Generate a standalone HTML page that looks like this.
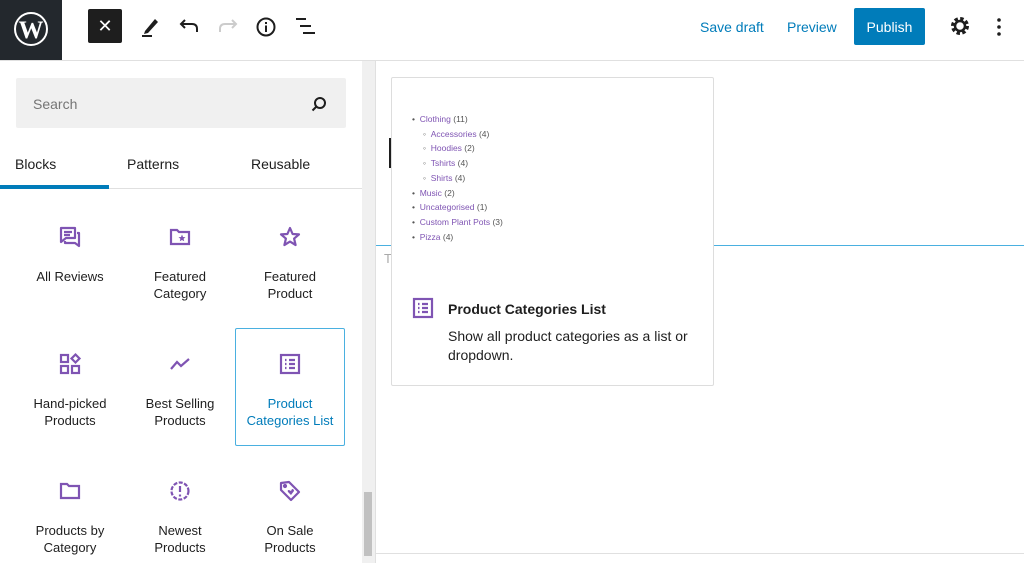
<!DOCTYPE html>
<html><head><meta charset="utf-8"><style>
*{margin:0;padding:0;box-sizing:border-box}
body{width:1024px;height:563px;overflow:hidden;background:#fff;font-family:"Liberation Sans",sans-serif;position:relative;color:#1e1e1e}
.a{position:absolute}
.lbl{position:absolute;width:110px;text-align:center;font-size:13px;line-height:17px;color:#1e1e1e}
.ic{position:absolute;width:24px;height:24px}
.ic svg{width:24px;height:24px;fill:none;stroke:#7f54b3;stroke-width:2.2}
</style></head><body>
<div class="a" style="left:0;top:0;width:62px;height:60px;background:#23282d"></div>
<svg class="a" style="left:13px;top:11px" width="36" height="36" viewBox="0 0 36 36"><circle cx="18" cy="18" r="16" fill="none" stroke="#fff" stroke-width="2"/><text x="18" y="27" font-family="Liberation Serif" font-size="25" font-weight="bold" fill="#fff" text-anchor="middle">W</text></svg>
<div class="a" style="left:0;top:60px;width:1024px;height:1px;background:#e0e0e0"></div>
<div class="a" style="left:88px;top:9px;width:34px;height:34px;background:#1e1e1e;border-radius:2px;color:#fff;font-size:18px;text-align:center;line-height:34px">✕</div>
<svg class="a" style="left:140px;top:14px" width="22" height="24" viewBox="0 0 22 24"><path d="M5 17 L15 5 L18 8 L8 19 L4 20 Z" fill="#1e1e1e"/><rect x="2" y="21" width="10" height="2" fill="#1e1e1e"/></svg>
<svg class="a" style="left:178px;top:16px" width="22" height="20" viewBox="0 0 22 20" fill="none" stroke="#1e1e1e" stroke-width="2"><path d="M7 4 L3 8 L7 12 M3 8 H14 Q19 8 19 13 V16"/></svg>
<svg class="a" style="left:217px;top:16px" width="22" height="20" viewBox="0 0 22 20" fill="none" stroke="#ccc" stroke-width="2"><path d="M15 4 L19 8 L15 12 M19 8 H8 Q3 8 3 13 V16"/></svg>
<svg class="a" style="left:255px;top:16px" width="22" height="22" viewBox="0 0 22 22" fill="none" stroke="#1e1e1e" stroke-width="2"><circle cx="11" cy="11" r="8.5"/><path d="M11 9.5 V16 M11 6 V8"/></svg>
<svg class="a" style="left:294px;top:17px" width="22" height="18" viewBox="0 0 22 18" stroke="#1e1e1e" stroke-width="2"><path d="M2 2 H12 M6 9 H17 M9 16 H21"/></svg>
<div class="a" style="left:700px;top:19px;font-size:14px;color:#007cba">Save draft</div>
<div class="a" style="left:787px;top:19px;font-size:14px;color:#007cba">Preview</div>
<div class="a" style="left:854px;top:8px;width:71px;height:37px;background:#007cba;border-radius:2px;color:#fff;font-size:14px;text-align:center;line-height:39px">Publish</div>
<svg class="a" style="left:950px;top:16px" width="20" height="20" viewBox="0 0 20 20"><circle cx="10" cy="10" r="6.5" fill="none" stroke="#1e1e1e" stroke-width="5" stroke-dasharray="3 2.1"/><circle cx="10" cy="10" r="5" fill="none" stroke="#1e1e1e" stroke-width="2.5"/></svg>
<svg class="a" style="left:996px;top:17px" width="6" height="20"><circle cx="3" cy="3" r="1.8" fill="#1e1e1e"/><circle cx="3" cy="10" r="1.8" fill="#1e1e1e"/><circle cx="3" cy="17" r="1.8" fill="#1e1e1e"/></svg>
<div class="a" style="left:375px;top:61px;width:1px;height:502px;background:#e0e0e0"></div>
<div class="a" style="left:362px;top:61px;width:13px;height:502px;background:#f0f0f0"></div>
<div class="a" style="left:364px;top:492px;width:8px;height:64px;background:#c1c1c1"></div>
<div class="a" style="left:16px;top:78px;width:330px;height:50px;background:#f0f0f0;border-radius:2px"></div>
<div class="a" style="left:33px;top:96px;font-size:14px;color:#757575">Search</div>
<svg class="a" style="left:311px;top:96px" width="16" height="16" viewBox="0 0 16 16" fill="none" stroke="#1e1e1e" stroke-width="2"><circle cx="9" cy="7" r="5"/><path d="M5.5 10.5 L1.5 14.5"/></svg>
<div class="a" style="left:15px;top:156px;font-size:14px">Blocks</div>
<div class="a" style="left:127px;top:156px;font-size:14px">Patterns</div>
<div class="a" style="left:251px;top:156px;font-size:14px">Reusable</div>
<div class="a" style="left:0;top:188px;width:362px;height:1px;background:#e0e0e0"></div>
<div class="a" style="left:0;top:185px;width:109px;height:4px;background:#007cba"></div>
<div class="a" style="left:235px;top:328px;width:110px;height:118px;border:1px solid #4ab0e0;border-radius:2px"></div>
<div class="ic" style="left:58px;top:225px"><svg viewBox="0 0 24 24"><path d="M3 3 H17 V13 H8 L3 17 Z M7 16 V18 H17 L21 21 V8 H19" stroke-linejoin="round"/><path d="M6 7 H14 M6 10 H12"/></svg></div>
<div class="ic" style="left:168px;top:225px"><svg viewBox="0 0 24 24"><path d="M3 5 H9 L11 7 H21 V19 H3 Z"/><path d="M14 9.5 L15 12 L17.5 12.2 L15.6 13.8 L16.2 16.3 L14 15 L11.8 16.3 L12.4 13.8 L10.5 12.2 L13 12 Z" fill="#7f54b3" stroke-width="0"/></svg></div>
<div class="ic" style="left:278px;top:225px"><svg viewBox="0 0 24 24"><path d="M12 3 L14.6 9 L21 9.4 L16.1 13.6 L17.6 20 L12 16.6 L6.4 20 L7.9 13.6 L3 9.4 L9.4 9 Z" stroke-linejoin="round"/></svg></div>
<div class="ic" style="left:58px;top:352px"><svg viewBox="0 0 24 24"><rect x="3" y="3" width="7" height="7"/><rect x="3" y="14" width="7" height="7"/><rect x="14" y="14" width="7" height="7"/><path d="M17.5 2.5 L21.5 6.5 L17.5 10.5 L13.5 6.5 Z"/></svg></div>
<div class="ic" style="left:168px;top:352px"><svg viewBox="0 0 24 24"><path d="M3 17 L9 10 L13 14 L21 7"/></svg></div>
<div class="ic" style="left:278px;top:352px"><svg viewBox="0 0 24 24"><rect x="3" y="3" width="18" height="18"/><path d="M7 8 H8.5 M11 8 H17 M7 12 H8.5 M11 12 H17 M7 16 H8.5 M11 16 H17"/></svg></div>
<div class="ic" style="left:58px;top:479px"><svg viewBox="0 0 24 24"><path d="M3 5 H9 L11 7 H21 V19 H3 Z"/></svg></div>
<div class="ic" style="left:168px;top:479px"><svg viewBox="0 0 24 24"><circle cx="12" cy="12" r="8.5" stroke-dasharray="4 1.5"/><path d="M12 7 V13 M12 15.5 V17.5"/></svg></div>
<div class="ic" style="left:278px;top:479px"><svg viewBox="0 0 24 24"><path d="M3 4 L11 3 L21 13 L13 21 L3 11 Z" stroke-linejoin="round"/><circle cx="7" cy="7" r="1" fill="#7f54b3"/><path d="M13 16 L10 13 Q9 11 11 11 L13 12 L14 10 Q16 10 16 12 Z" fill="#7f54b3" stroke-width="0"/></svg></div>
<div class="lbl" style="left:15px;top:268px">All Reviews</div>
<div class="lbl" style="left:125px;top:268px">Featured<br>Category</div>
<div class="lbl" style="left:235px;top:268px">Featured<br>Product</div>
<div class="lbl" style="left:15px;top:395px">Hand-picked<br>Products</div>
<div class="lbl" style="left:125px;top:395px">Best Selling<br>Products</div>
<div class="lbl" style="left:235px;top:395px;color:#007cba">Product<br>Categories List</div>
<div class="lbl" style="left:15px;top:522px">Products by<br>Category</div>
<div class="lbl" style="left:125px;top:522px">Newest<br>Products</div>
<div class="lbl" style="left:235px;top:522px">On Sale<br>Products</div>
<div class="a" style="left:376px;top:245px;width:648px;height:1px;background:#4ab0e0"></div>
<div class="a" style="left:376px;top:553px;width:648px;height:1px;background:#e0e0e0"></div>
<div class="a" style="left:389px;top:138px;width:2px;height:30px;background:#1e1e1e"></div>
<div class="a" style="left:384px;top:251px;font-size:13px;color:#aaa">T</div>
<div class="a" style="left:391px;top:77px;width:323px;height:309px;background:#fff;border:1px solid #ddd;border-radius:2px"></div>
<div class="a" style="left:412px;top:112px;font-size:8.5px;line-height:14.7px;color:#555">
<div>• &nbsp;<span style="color:#7f54b3">Clothing</span> (11)</div>
<div style="padding-left:11px">◦ &nbsp;<span style="color:#7f54b3">Accessories</span> (4)</div>
<div style="padding-left:11px">◦ &nbsp;<span style="color:#7f54b3">Hoodies</span> (2)</div>
<div style="padding-left:11px">◦ &nbsp;<span style="color:#7f54b3">Tshirts</span> (4)</div>
<div style="padding-left:11px">◦ &nbsp;<span style="color:#7f54b3">Shirts</span> (4)</div>
<div>• &nbsp;<span style="color:#7f54b3">Music</span> (2)</div>
<div>• &nbsp;<span style="color:#7f54b3">Uncategorised</span> (1)</div>
<div>• &nbsp;<span style="color:#7f54b3">Custom Plant Pots</span> (3)</div>
<div>• &nbsp;<span style="color:#7f54b3">Pizza</span> (4)</div>
</div>
<div class="ic" style="left:411px;top:296px"><svg viewBox="0 0 24 24"><rect x="3" y="3" width="18" height="18"/><path d="M7 8 H8.5 M11 8 H17 M7 12 H8.5 M11 12 H17 M7 16 H8.5 M11 16 H17"/></svg></div>
<div class="a" style="left:448px;top:301px;font-size:14px;font-weight:bold">Product Categories List</div>
<div class="a" style="left:448px;top:327px;width:250px;font-size:14px;line-height:19px">Show all product categories as a list or dropdown.</div>
</body></html>
